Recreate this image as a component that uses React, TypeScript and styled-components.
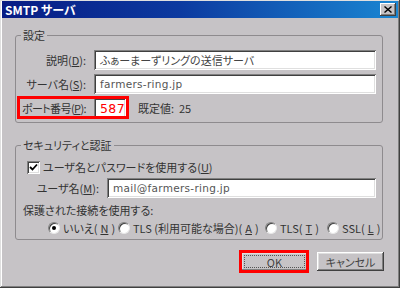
import styled, { createGlobalStyle } from 'styled-components';

const GlobalStyle = createGlobalStyle`
  html, body {
    margin: 0;
    padding: 0;
    background: #c6c3c6;
  }
  body {
    font-family: 'Noto Sans CJK JP', 'Noto Sans', sans-serif;
    font-size: 11px;
    font-feature-settings: 'palt';
    color: #222;
  }
`;

const face = '#c6c3c6';

const Window = styled.div`
  width: 400px;
  height: 288px;
  box-sizing: border-box;
  padding: 1px 2px 2px 2px;
  background: ${face};
  display: flex;
  flex-direction: column;
  box-shadow: inset -1px -1px #404040, inset 1px 1px #dfdfdf,
    inset -2px -2px #808080, inset 2px 2px #ffffff;
`;

const TitleBar = styled.div`
  height: 17px;
  display: flex;
  align-items: center;
  justify-content: space-between;
  padding: 0 2px 0 3px;
  background: linear-gradient(to right, #081c84, #0c3aa0 45%, #1a86d2);
`;

const Title = styled.span`
  color: #fff;
  font-weight: bold;
  font-size: 12px;
  line-height: 14px;
`;

const CloseButton = styled.div`
  width: 16px;
  height: 13px;
  background: ${face};
  display: flex;
  align-items: center;
  justify-content: center;
  box-shadow: inset -1px -1px #404040, inset 1px 1px #ffffff,
    inset -2px -2px #808080;
`;

const Content = styled.div`
  flex: 1;
  display: flex;
  flex-direction: column;
  padding: 0 15px 0 13px;
`;

const Group = styled.div<{ $top: number }>`
  position: relative;
  margin-top: ${(p) => p.$top}px;
  border: 1px solid #8e8b8e;
  border-radius: 3px;
  display: flex;
  flex-direction: column;
`;

const Legend = styled.span`
  position: absolute;
  top: -8px;
  left: 5px;
  padding: 0 2px;
  background: ${face};
  line-height: 14px;
  color: #333;
`;

const Settings = styled.div`
  padding: 14px 6px 4px 0;
  display: flex;
  flex-direction: column;
  gap: 4px;
`;

const Row = styled.div`
  position: relative;
  height: 20px;
  display: flex;
  align-items: center;
`;

const Label = styled.label<{ $width: number; $tight?: boolean }>`
  width: ${(p) => p.$width}px;
  flex: none;
  display: flex;
  justify-content: flex-end;
  margin-right: 8px;
  white-space: nowrap;
  line-height: 14px;
  color: #333;
  letter-spacing: ${(p) => (p.$tight ? '-0.6px' : '0')};
`;

const TextBox = styled.div<{ $width?: number; $color?: string }>`
  height: 20px;
  box-sizing: border-box;
  ${(p) => (p.$width ? `width: ${p.$width}px; flex: none;` : 'flex: 1;')}
  background: #fff;
  padding: 0 6px;
  display: flex;
  align-items: center;
  color: ${(p) => p.$color || '#444'};
  white-space: nowrap;
  overflow: hidden;
  box-shadow: inset 1px 1px #808080, inset -1px -1px #ffffff,
    inset 2px 2px #404040, inset -2px -2px #dfdfdf;
`;

const Mono = styled.span`
  font-family: 'DejaVu Sans', 'Noto Sans', sans-serif;
  font-size: 10.5px;
  letter-spacing: 0.3px;
`;

const Port = styled.span`
  font-family: 'DejaVu Sans', 'Noto Sans', sans-serif;
  font-size: 12.5px;
  letter-spacing: 0.4px;
`;

const Highlight = styled.div<{ $l: number; $t: number; $w: number; $h: number }>`
  position: absolute;
  left: ${(p) => p.$l}px;
  top: ${(p) => p.$t}px;
  width: ${(p) => p.$w}px;
  height: ${(p) => p.$h}px;
  box-sizing: border-box;
  border: 3px solid #ff0000;
  pointer-events: none;
`;

const Note = styled.span`
  margin-left: 12px;
  color: #333;
`;

const Security = styled.div`
  padding: 13px 6px 3px 0;
  display: flex;
  flex-direction: column;
`;

const CheckRow = styled.div`
  height: 16px;
  display: flex;
  align-items: center;
  padding-left: 11px;
  gap: 3px;
  margin-bottom: 3px;
  color: #333;
`;

const CheckBox = styled.span`
  width: 13px;
  height: 13px;
  box-sizing: border-box;
  background: #fff;
  display: flex;
  align-items: center;
  justify-content: center;
  box-shadow: inset 1px 1px #808080, inset -1px -1px #ffffff,
    inset 2px 2px #404040, inset -2px -2px #dfdfdf;
`;

const Caption = styled.div`
  padding-left: 7px;
  margin-top: 5px;
  line-height: 14px;
  color: #333;
`;

const RadioRow = styled.div`
  height: 16px;
  margin-top: 3px;
  display: flex;
  align-items: center;
  padding-left: 32px;
`;

const RadioItem = styled.label<{ $width: number }>`
  width: ${(p) => p.$width}px;
  flex: none;
  display: flex;
  align-items: center;
  gap: 3px;
  white-space: nowrap;
  color: #333;
`;

const Radio = styled.span<{ $on?: boolean }>`
  width: 12px;
  height: 12px;
  flex: none;
  border-radius: 50%;
  box-sizing: border-box;
  background: #fff;
  border: 1px solid;
  border-color: #808080 #e8e8e8 #e8e8e8 #808080;
  box-shadow: inset 1px 1px #404040;
  display: flex;
  align-items: center;
  justify-content: center;

  &::after {
    content: '';
    width: 4px;
    height: 4px;
    border-radius: 50%;
    background: ${(p) => (p.$on ? '#000' : 'transparent')};
  }
`;

const ButtonRow = styled.div`
  display: flex;
  justify-content: flex-end;
  gap: 9px;
  margin-top: 12px;
  margin-right: -1px;
`;

const Button = styled.div<{ $focus?: boolean }>`
  position: relative;
  width: 67px;
  height: 19px;
  box-sizing: border-box;
  display: flex;
  align-items: center;
  justify-content: center;
  color: #444;
  background: ${face};
  box-shadow: inset -1px -1px #404040, inset 1px 1px #ffffff,
    inset -2px -2px #808080, inset 2px 2px #dfdfdf;

  &::before {
    content: '';
    position: absolute;
    inset: 3px;
    border: 1px dotted ${(p) => (p.$focus ? '#555' : 'transparent')};
  }
`;

export default function App() {
  return (
    <>
      <GlobalStyle />
      <Window>
        <TitleBar>
          <Title>SMTP サーバ</Title>
          <CloseButton>
            <svg width="8" height="7" viewBox="0 0 8 7">
              <path d="M0.5 0.5 L7.5 6.5 M7.5 0.5 L0.5 6.5" stroke="#000" strokeWidth="1.4" />
            </svg>
          </CloseButton>
        </TitleBar>

        <Content>
          <Group $top={17}>
            <Legend>設定</Legend>
            <Settings>
              <Row>
                <Label $width={70}>説明(<u>D</u>):</Label>
                <TextBox>ふぁーまーずリングの送信サーバ</TextBox>
              </Row>
              <Row>
                <Label $width={70}>サーバ名(<u>S</u>):</Label>
                <TextBox $color="#555"><Mono>farmers-ring.jp</Mono></TextBox>
              </Row>
              <Row>
                <Label $width={70} $tight>ポート番号(<u>P</u>):</Label>
                <TextBox $width={32} $color="#ff0000"><Port>587</Port></TextBox>
                <Note>既定値:&nbsp;&nbsp;25</Note>
                <Highlight $l={1} $t={-2} $w={112} $h={23} />
              </Row>
            </Settings>
          </Group>

          <Group $top={22}>
            <Legend>セキュリティと認証</Legend>
            <Security>
              <CheckRow>
                <CheckBox>
                  <svg width="9" height="9" viewBox="0 0 9 9">
                    <path d="M1 4 L3.5 6.5 L8 1.5" fill="none" stroke="#000" strokeWidth="1.8" />
                  </svg>
                </CheckBox>
                <span>ユーザ名とパスワードを使用する(<u>U</u>)</span>
              </CheckRow>
              <Row>
                <Label $width={83}>ユーザ名(<u>M</u>):</Label>
                <TextBox $color="#555"><Mono>mail@farmers-ring.jp</Mono></TextBox>
              </Row>
              <Caption>保護された接続を使用する:</Caption>
              <RadioRow>
                <RadioItem $width={70}>
                  <Radio $on />
                  いいえ(<u>N</u>)
                </RadioItem>
                <RadioItem $width={147}>
                  <Radio />
                  TLS (利用可能な場合)(<u>A</u>)
                </RadioItem>
                <RadioItem $width={62}>
                  <Radio />
                  TLS(<u>T</u>)
                </RadioItem>
                <RadioItem $width={48}>
                  <Radio />
                  SSL(<u>L</u>)
                </RadioItem>
              </RadioRow>
            </Security>
          </Group>

          <ButtonRow>
            <Button $focus>
              OK
              <Highlight $l={-2} $t={-2} $w={70} $h={23} />
            </Button>
            <Button>キャンセル</Button>
          </ButtonRow>
        </Content>
      </Window>
    </>
  );
}
